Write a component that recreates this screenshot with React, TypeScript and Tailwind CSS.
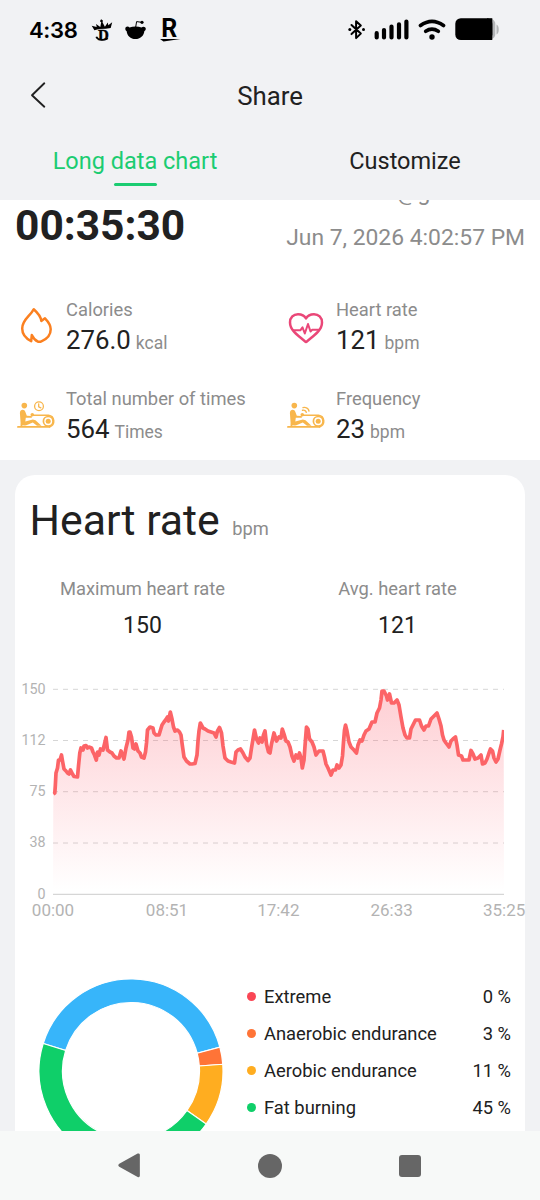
import React from "react";

const heartRateLine =
  "53.3,794 54.8,793 55.3,786 56,773 57.5,768 58.5,760 60,760 61.5,755 62.5,761 64,769 66,771 67.5,773 69,774 70.5,770 72.5,774 74,776.5 77.5,777 78.5,766 79.8,753 81,748 83,750 84,746 86,745.5 87.5,748 89,747 91.5,748 93,752 94.5,755 96.3,760 97.5,752 99,755 100.5,749 103,750 104.5,744 106,737.5 107.5,750 110,752 112,753 114,756 116.5,758 119,758 121,751 122.5,755 124,759 126,748 128,740 129,732 130,732 131.5,737 133,748 134.5,749 136,744 138,751 140,753 141.5,757 144,758 145.5,752 146.5,743 147.5,730 150,727 153,728 154,733 156,735 159,735 160.5,730 162,725 164,722 166,719.5 167.5,717 168.5,721 170.3,712 172,719 173.5,727 175,731 177.5,730 179.5,732 181,735 182,743 184,757 186.5,761 190,764 192,764 195,763.5 197,755 198,741 199,731 200.3,723 203,728 205,729 208,731 211,732 214,733 216,737 217.5,731 219.5,727.5 221.5,733 223,746 225,758 228,761 231,762 234.5,763 236,752 238,750 240.5,749 243,753 245,757 248,760.5 250,758 251.5,748 253,739 254.5,730 256.5,739 258.5,743 260,738 262,742 263.5,735 265,731 266.5,744 268.5,752 270,753 271.5,744 274,733 276.5,741 279,737 281,738 282.3,729 284,734 286,741 288,742 290,747 292,756 294,761 296,755 298,758 299.5,753 301,758 302.3,768 304,760 305.3,742 306.5,727 308,729 309.5,739 312,742 314,747 316,755 319,751 323,751 324.5,757 326,764 328,768 331,775 333,770 335.5,770 337,765 339,768 341,765 342.5,756 343.5,742 344.5,730 345.5,725 347,731 349,742 351,747 354,750 356.5,753 358,745 360,740 362,741 364,735 366,731 369,729 372,722 375,722 377,713 379.5,708 381,700 382,691 384,691 386.5,696 387.5,700 389.5,694 391.5,703 394,703 397,700 399,705 401,717 403,728 405,735 407,738 409.5,738 411,729 413,725 415.5,720 419.5,720 421.5,726 424,730 426,726 428.5,726 431,719 434,716 437,713 439,719 441,726 442.5,735 444,740 446,743 449,747 451,741 453,739 455.5,737 457,745 458.5,755 461.5,756 463,760 469,760 471,750.5 473,754 475,759 478,758 481,755 482.5,764 485,763 487,759 489,753 490.5,749 492.5,751 494,758 496,762 498,759 500,750 501.5,744 503,737 503.7,730";

const yTicks = [
  { label: "150", y: 689.3 },
  { label: "112", y: 740.5 },
  { label: "75", y: 791.7 },
  { label: "38", y: 843 },
  { label: "0", y: 894.3 },
];

const xTicks = [
  { label: "00:00", x: 53 },
  { label: "08:51", x: 167 },
  { label: "17:42", x: 278.3 },
  { label: "26:33", x: 391.7 },
  { label: "35:25", x: 504.2 },
];

// start and end in degrees, clockwise from the right
const zones = [
  { color: "#37b5fa", start: -162.6, end: -15 },
  { color: "#ff7437", start: -15, end: -4.2 },
  { color: "#ffad20", start: -4.2, end: 35.2 },
  { color: "#0fcf69", start: 35.2, end: 197.4 },
];

const legend = [
  { name: "Extreme", value: "0 %", dot: "bg-[#fa4655]" },
  { name: "Anaerobic endurance", value: "3 %", dot: "bg-[#ff7437]" },
  { name: "Aerobic endurance", value: "11 %", dot: "bg-[#ffad20]" },
  { name: "Fat burning", value: "45 %", dot: "bg-[#0fcf69]" },
];

function ringSlice(start: number, end: number) {
  const at = (r: number, deg: number) => {
    const a = (deg * Math.PI) / 180;
    return `${92 + r * Math.cos(a)} ${92 + r * Math.sin(a)}`;
  };
  return `M${at(92, start)} A92 92 0 0 1 ${at(92, end)} L${at(68.5, end)} A68.5 68.5 0 0 0 ${at(68.5, start)} Z`;
}

function StatusBar() {
  return (
    <div className="flex h-[60px] items-center justify-between pl-[29px] pr-[40px]">
      <div className="flex items-center">
        <span className="w-[62px] font-[Inter] text-[22px] font-semibold tracking-[-0.300px]">
          4:38
        </span>
        <svg width="92" height="30" viewBox="91 15 92 30" className="overflow-visible">
          <path d="M91.700 25.800l5 1.200-.6-3 4.200 3 .9-4.800-1.300-1 1.200-1.900 1.800 1.100-.3 2 2.300 4.300 2.900-4.200.5 2.700 3.900-3-1.500 5.800-5 .8-6.500.3-4.800 1.200z" />
          <text x="103.300" y="39.500" textAnchor="middle" fontSize="15" fontWeight="bold" className="font-['Liberation_Serif']" stroke="#000" strokeWidth=".4">
            D
          </text>
          <path d="M96.300 36.800c1.500 4 8.500 3.800 11.500 1.500" fill="none" stroke="#000" strokeWidth="1.800" />
          <path d="M125.300 28.700c0-2 2.700-2.800 4.200-1.300 3.500-1.300 8.500-1.300 12 0 1.700-1.500 4.300-.5 4.300 1.400 0 1.200-.7 2-1.500 2.400-.2 4.400-4.200 7.900-8.900 7.900s-8.500-3.500-8.700-7.900c-.9-.5-1.400-1.300-1.400-2.500z" />
          <path d="M135.700 27l.9-5.400 5 .7" fill="none" stroke="#000" strokeWidth="1" />
          <circle cx="142" cy="22.300" r="1.600" />
          <text x="169.200" y="37.300" textAnchor="middle" fontSize="25" fontWeight="bold" textLength="16" lengthAdjust="spacingAndGlyphs" className="font-[Roboto]">
            R
          </text>
          <path d="M160 39h20.500l-17 2.500z" />
        </svg>
      </div>
      <svg width="152" height="24" viewBox="348 18 152 24">
        <path d="M351.500 25l9.300 8.600-4.700 4.500V21.200l4.700 4.400-9.300 8.500" fill="none" stroke="#000" strokeWidth="2" strokeLinejoin="round" strokeLinecap="round" />
        <circle cx="349.800" cy="29.600" r="1.500" />
        <circle cx="363.500" cy="29.600" r="1.500" />
        <g stroke="#000" strokeWidth="4.200" strokeLinecap="round">
          <path d="M376.700 33.200v4.300M384 30v7.500M391.500 26.500v11M399 24.300v13.200M406.400 21.500v16" />
        </g>
        <g fill="none" stroke="#000" strokeWidth="3.700" strokeLinecap="round">
          <path d="M420.500 25.500c7.500-5.400 15.500-5.400 23 0" />
          <path d="M425.700 31.300c4-2.700 8.500-2.700 12.600 0" />
        </g>
        <circle cx="432" cy="37" r="2.700" />
        <path d="M492 19c2.300 1 3.300 3 3.300 5v10c0 2-1 4-3.300 5z" fill="#b4b6b8" />
        <rect x="455.300" y="18.200" width="37" height="21.800" rx="5.500" />
        <path d="M487 18.200h5.300V40H487z" />
        <path d="M496.500 24.500c3 .8 3 9.200 0 10z" fill="#b4b6b8" />
      </svg>
    </div>
  );
}

function FlameIcon() {
  return (
    <svg width="42" height="42" viewBox="0 0 42 42" fill="none" stroke="#fb8020" strokeWidth="2.500" strokeLinejoin="round" strokeLinecap="round">
      <path d="M18.700 5.300C15.500 12 7.200 15.500 7.200 24.500c0 5 2.800 9.500 9 12.700l.6-6.200c1 2.200 2.300 5 6.200 6.700 1.200.2 2.300.1 3.400-.4 5.600-2.300 9.300-7 9.300-12.100 0-4.200-2.600-7.700-5.700-10.900l-3.700 2.600c-.5-4.500-3.900-8.300-7.600-11.600z" />
    </svg>
  );
}

function HeartIcon() {
  return (
    <svg width="42" height="42" viewBox="0 0 42 42" fill="none" stroke="#ea4778" strokeLinejoin="round" strokeLinecap="round">
      <path strokeWidth="2.500" d="M21 38C12 31 5 26 5 18.500 5 13.500 8.500 10.200 13 10.200c3.500 0 6.500 1.500 8 4.300 1.500-2.800 4.500-4.300 8-4.300 4.500 0 8 3.300 8 8.300C37 26 30 31 21 38z" />
      <path strokeWidth="2" d="M8.500 26.300H15.300l2.200-3 2.300 6.200 3.200-9.500 2.500 7.500 1.700-1.700H33.500" />
    </svg>
  );
}

function RowerIcon({ children }: { children: React.ReactNode }) {
  return (
    <svg width="42" height="42" viewBox="0 0 42 42" fill="none" stroke="#f8b64c" strokeLinejoin="round" strokeLinecap="round">
      <circle cx="9.300" cy="12.600" r="2.800" fill="#f8b64c" stroke="none" />
      <path d="M4.900 20c0-4 4.800-4.200 5.600-.7l1.300 3.400 5 .2v1.800h-6l-.5 3.800 7.500-2 2.700.8 6 5.500h-4.500l-4.200-3.200-6.500 2.600c-4 .8-6-.5-5.800-3.700z" fill="#f8b64c" stroke="none" />
      <path strokeWidth="1.900" d="M3 33.900h31.500M6.500 31v2.500" />
      <circle cx="17.300" cy="21.800" r="1.800" fill="#f8b64c" stroke="none" />
      <path strokeWidth="1.500" d="M18 22.200h15.500a6 6 0 0 1 1 11.700" />
      <circle cx="33.200" cy="28.300" r="4.800" strokeWidth="1.700" />
      <circle cx="33.200" cy="28.300" r="2.500" fill="#f8b64c" stroke="none" />
      {children}
    </svg>
  );
}

function Stat({
  icon,
  label,
  value,
  unit,
}: {
  icon: React.ReactNode;
  label: string;
  value: string;
  unit: string;
}) {
  return (
    <div className="flex h-[60px] items-center gap-[9px] pl-[15px]">
      {icon}
      <div className="pt-[5px]">
        <div className="text-[18.350px] leading-[28px] text-[#8c8c8c]">{label}</div>
        <div className="flex items-baseline gap-[5px] leading-[32px]">
          <span className="text-[25.800px]">{value}</span>
          <span className="text-[17.500px] text-[#8c8c8c]">{unit}</span>
        </div>
      </div>
    </div>
  );
}

function Summary() {
  return (
    <section className="h-[260px] bg-white">
      <div className="flex h-[95px] justify-between px-[15px]">
        <div className="text-[42.500px] font-bold leading-[52px]">00:35:30</div>
        <div className="-mt-[22px] text-right text-[22.850px] leading-[30px] text-[#8c8c8c]">
          <div className="mb-[15px]">usernametest12@gmail.com</div>
          <div>Jun 7, 2026 4:02:57 PM</div>
        </div>
      </div>
      <div className="grid grid-cols-2 gap-y-[29px]">
        <Stat icon={<FlameIcon />} label="Calories" value="276.0" unit="kcal" />
        <Stat icon={<HeartIcon />} label="Heart rate" value="121" unit="bpm" />
        <Stat
          icon={
            <RowerIcon>
              <circle cx="24" cy="13.300" r="4.400" strokeWidth="1.300" />
              <path strokeWidth="1.300" d="M23.700 10.800v3l2.200 1" />
            </RowerIcon>
          }
          label="Total number of times"
          value="564"
          unit="Times"
        />
        <Stat
          icon={
            <RowerIcon>
              <path strokeWidth="1.400" d="M18 14.600c2.800-.8 5.800 1 6 3.500M17.500 17.300c2-.5 3.500.5 3.800 2" />
            </RowerIcon>
          }
          label="Frequency"
          value="23"
          unit="bpm"
        />
      </div>
    </section>
  );
}

function HeartRateChart() {
  return (
    <svg width="510" height="250" viewBox="15 675 510 250" className="block overflow-visible font-[Roboto]">
      <defs>
        <linearGradient id="area" gradientUnits="userSpaceOnUse" x1="0" y1="689" x2="0" y2="890">
          <stop offset="0" stopColor="#fc5c6c" stopOpacity="0.3" />
          <stop offset="1" stopColor="#fc5c6c" stopOpacity="0" />
        </linearGradient>
        <clipPath id="plot">
          <rect x="52.500" y="680" width="451.500" height="220" />
        </clipPath>
      </defs>
      {yTicks.map((t) => (
        <g key={t.label}>
          <text x="45.500" y={t.y + 4.300} textAnchor="end" fontSize="14.300" fill="#b3b3b3">
            {t.label}
          </text>
          <path
            d={`M53 ${t.y}H504`}
            stroke={t.label === "0" ? "#cccccc" : "#d6d6d6"}
            strokeWidth="1"
            strokeDasharray={t.label === "0" ? undefined : "5 5"}
          />
        </g>
      ))}
      <polygon points={`53,894 ${heartRateLine} 504,894`} fill="url(#area)" />
      <polyline
        points={heartRateLine}
        fill="none"
        stroke="#fc6467"
        strokeWidth="3.700"
        strokeLinejoin="round"
        clipPath="url(#plot)"
      />
      {xTicks.map((t) => (
        <text key={t.label} x={t.x} y="916" textAnchor="middle" fontSize="17" fill="#b3b3b3">
          {t.label}
        </text>
      ))}
    </svg>
  );
}

function HeartRateCard() {
  return (
    <section className="mx-[15px] mt-[15px] h-[700px] rounded-[20px] bg-white">
      <div className="flex h-[99px] items-baseline gap-[12.500px] pl-[14.500px] pt-[18px]">
        <h2 className="text-[42.800px] leading-[54px]">Heart rate</h2>
        <span className="text-[18.300px] text-[#8c8c8c]">bpm</span>
      </div>
      <div className="grid h-[101px] grid-cols-2 text-center">
        <div>
          <div className="text-[18.350px] leading-[30px] text-[#8c8c8c]">Maximum heart rate</div>
          <div className="mt-[7px] text-[23px] leading-[30px]">150</div>
        </div>
        <div>
          <div className="text-[18.350px] leading-[30px] text-[#8c8c8c]">Avg. heart rate</div>
          <div className="mt-[7px] text-[23px] leading-[30px]">121</div>
        </div>
      </div>
      <HeartRateChart />
      <div className="mt-[53.500px] flex">
        <svg width="184" height="184" viewBox="0 0 184 184" className="ml-[24px] shrink-0">
          {zones.map((z) => (
            <path key={z.color} d={ringSlice(z.start, z.end)} fill={z.color} stroke="#fff" strokeWidth="1.200" />
          ))}
        </svg>
        <ul className="ml-[23.500px] mr-[14px] flex-1">
          {legend.map((l) => (
            <li key={l.name} className="flex h-[37px] items-center text-[18.350px]">
              <span className={`mr-[8.500px] mb-[2px] size-[9px] rounded-full ${l.dot}`} />
              <span className="flex-1">{l.name}</span>
              <span>{l.value}</span>
            </li>
          ))}
        </ul>
      </div>
    </section>
  );
}

export default function App() {
  return (
    <div className="flex h-[1200px] w-[540px] flex-col overflow-hidden bg-[#f1f2f4] font-[Roboto,sans-serif] text-[#212121]">
      <header className="h-[200px] shrink-0">
        <div className="text-black">
          <StatusBar />
        </div>
        <div className="grid h-[72px] grid-cols-3 items-center">
          <svg width="20" height="30" viewBox="28 81 20 30" className="ml-[28px]" fill="none" stroke="#212121" strokeWidth="1.900" strokeLinecap="round" strokeLinejoin="round">
            <path d="M44.300 83.300L32 95.200l12.300 11.500" />
          </svg>
          <h1 className="text-center text-[25.800px]">Share</h1>
        </div>
        <div className="grid grid-cols-2 text-center text-[23.500px] leading-[30px]">
          <div className="pt-[14px] text-[#1bcc71]">
            Long data chart
            <div className="mx-auto mt-[7px] h-[3px] w-[43px] rounded-full bg-[#1bcc71]" />
          </div>
          <div className="pt-[14px]">Customize</div>
        </div>
      </header>

      <main className="h-[931px] shrink-0 overflow-hidden">
        <Summary />
        <HeartRateCard />
      </main>

      <nav className="flex h-[69px] shrink-0 items-center justify-center gap-[117px] bg-[#f7f9f8] pr-[2px]">
        <svg width="23" height="25" viewBox="0 0 24 26" fill="#666">
          <path d="M1.300 11.300L20.500.6c1.200-.6 2.300 0 2.300 1.300v21.900c0 1.300-1.200 1.900-2.300 1.200L1.300 14.300c-1.300-.8-1.300-2.200 0-3z" />
        </svg>
        <div className="size-[24px] rounded-full bg-[#666]" />
        <div className="size-[22px] rounded-[3px] bg-[#666]" />
      </nav>
    </div>
  );
}
